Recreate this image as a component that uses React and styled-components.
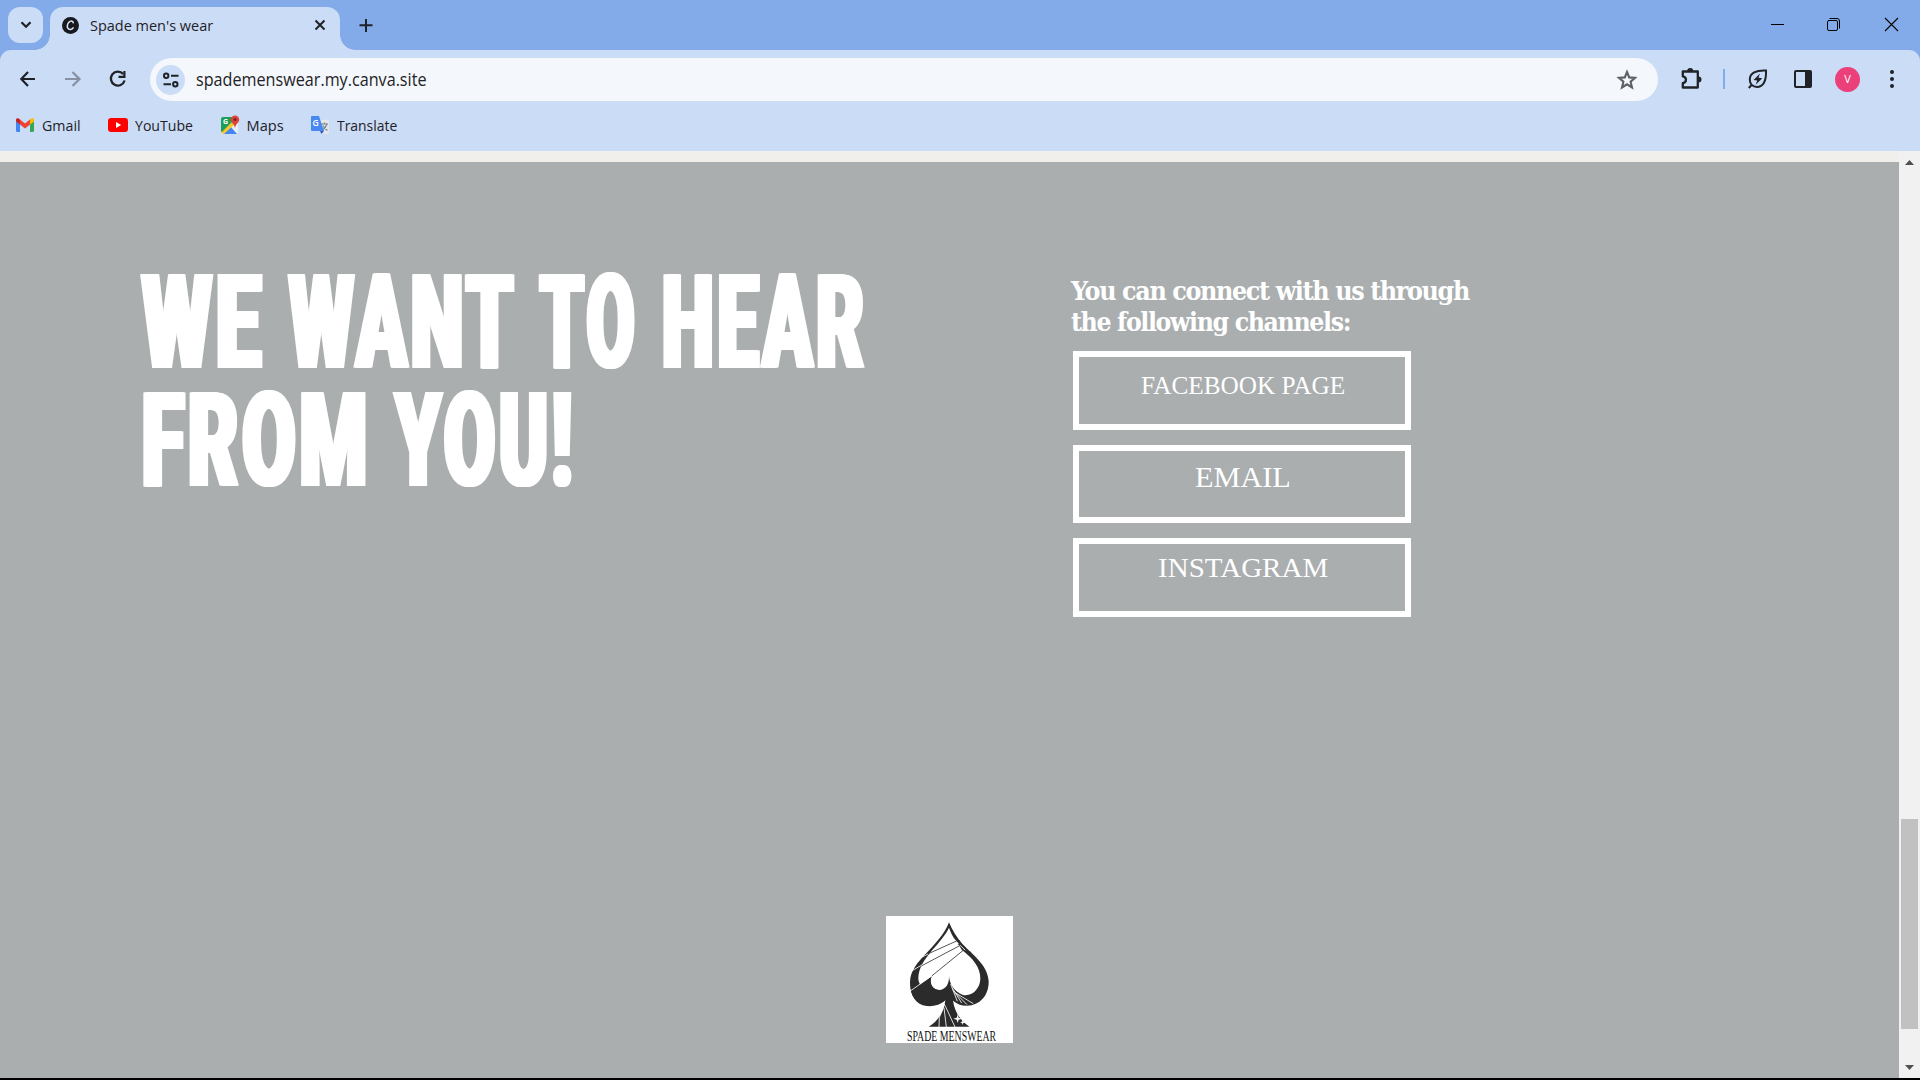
import React, { useLayoutEffect, useRef, useState } from "react";
import styled, { createGlobalStyle } from "styled-components";

const GlobalStyle = createGlobalStyle`
  * { box-sizing: border-box; }
  html, body { margin: 0; padding: 0; overflow: hidden; background: #000; }
`;

const Window = styled.div`
  width: 1920px;
  height: 1080px;
  display: flex;
  flex-direction: column;
  border-bottom: 2px solid #000;
  font-family: "Open Sans", "Noto Sans", sans-serif;
  color: #1f2226;
  overflow: hidden;
`;

/* ---------- text squeezed to a given width ---------- */
const FitBox = styled.span`
  display: block;
  flex: none;
  width: ${(p) => p.$width}px;
  margin-left: ${(p) => p.$left || 0}px;
  white-space: nowrap;
`;
const FitInner = styled.span`
  display: inline-block;
  white-space: pre;
  transform-origin: left center;
`;
function Fit({ width, left, children }) {
  const ref = useRef(null);
  const [scale, setScale] = useState(1);
  useLayoutEffect(() => {
    setScale(width / ref.current.offsetWidth);
  }, [width, children]);
  return (
    <FitBox $width={width} $left={left}>
      <FitInner ref={ref} style={{ transform: `scaleX(${scale})` }}>{children}</FitInner>
    </FitBox>
  );
}

/* ---------- tab strip ---------- */
const TabStrip = styled.header`
  flex: none;
  height: 50px;
  display: flex;
  background: #84abe9;
  padding-left: 8px;
`;
const TabSearch = styled.button`
  width: 35px;
  height: 36px;
  margin: 7px 7px 0 0;
  padding: 0;
  border: 0;
  border-radius: 12px;
  background: #cbdcf6;
  display: grid;
  place-items: center;
`;
const Tab = styled.div`
  position: relative;
  width: 290px;
  height: 43px;
  margin-top: 7px;
  padding: 0 11px 7px 12px;
  display: flex;
  align-items: center;
  background: #cbdcf6;
  border-radius: 13px 13px 0 0;
  font-size: 14.6px;
  line-height: 22px;
  &::before, &::after {
    content: "";
    position: absolute;
    bottom: 0;
    width: 15px;
    height: 15px;
  }
  &::before { left: -15px; background: radial-gradient(circle at 0 0, transparent 14.5px, #cbdcf6 15px); }
  &::after { right: -15px; background: radial-gradient(circle at 100% 0, transparent 14.5px, #cbdcf6 15px); }
`;
const TabIcon = styled.svg`
  width: 17px;
  height: 17px;
  margin-right: 11px;
`;
const TabClose = styled.svg`
  width: 18px;
  height: 18px;
  margin-left: auto;
`;
const NewTab = styled.svg`
  width: 20px;
  height: 20px;
  margin: 15px 0 0 15.5px;
`;
const Controls = styled.div`
  margin-left: auto;
  display: flex;
  gap: 42px;
  padding: 17px 21px 0 0;
  svg { width: 15px; height: 15px; display: block; }
`;

/* ---------- toolbar ---------- */
const ToolbarBack = styled.div`
  flex: none;
  height: 101px;
  background: #84abe9;
`;
const Toolbar = styled.div`
  height: 101px;
  background: #cbdcf6;
  border-radius: 11px 11px 0 0;
  display: flex;
  flex-direction: column;
`;
const NavRow = styled.div`
  display: flex;
  align-items: center;
  height: 58px;
  padding: 0 16px;
`;
const Icon = styled.svg`
  flex: none;
  width: 24px;
  height: 24px;
  margin-left: ${(p) => p.$left || 0}px;
`;
const Omnibox = styled.div`
  flex: none;
  width: 1508px;
  height: 43px;
  margin: 1px 0 0 20px;
  padding: 0 19px 0 6px;
  display: flex;
  align-items: center;
  border-radius: 22px;
  background: #f4f7fc;
  font-size: 17.4px;
  line-height: 26px;
`;
const SiteInfo = styled.div`
  width: 30px;
  height: 30px;
  margin-right: 11px;
  border-radius: 50%;
  background: #cbdcf6;
  display: grid;
  place-items: center;
`;
const Address = styled.div`
  padding-bottom: 2px;
`;
const Divider = styled.div`
  width: 2px;
  height: 20px;
  margin: 0 20px 0 20px;
  background: #84abe9;
`;
const Avatar = styled.div`
  width: 25px;
  height: 25px;
  margin-left: 20.5px;
  border-radius: 50%;
  background: #ec407a;
  color: #fff;
  font-size: 11px;
  line-height: 24px;
  text-align: center;
`;
const Bookmarks = styled.nav`
  display: flex;
  padding: 5px 0 0 15px;
`;
const Bookmark = styled.a`
  display: flex;
  align-items: center;
  height: 24px;
  margin-right: ${(p) => p.$gap}px;
  font-size: 14.6px;
  line-height: 22px;
  svg { flex: none; width: 20px; height: 20px; margin-right: ${(p) => p.$inner}px; }
`;

/* ---------- page ---------- */
const Viewport = styled.div`
  flex: 1;
  min-height: 0;
  display: flex;
`;
const Page = styled.main`
  flex: 1;
  display: flex;
  flex-direction: column;
  background: #aaaeaf;
  border-top: 11px solid #f0efeb;
  color: #fff;
`;
const Contact = styled.section`
  display: flex;
  height: 754px;
  padding: 102px 0 0 142px;
`;
const Title = styled.h1`
  width: 929px;
  margin: 0;
  font-family: Roboto, sans-serif;
  font-weight: 900;
  font-size: 131px;
  line-height: 118px;
  letter-spacing: 7px;
  text-shadow: 1.5px 0 #fff, -1.5px 0 #fff, 3px 0 #fff, -3px 0 #fff, 4.5px 0 #fff, -4.5px 0 #fff;
`;
const TitleLine = styled.span`
  display: flex;
`;
const Channels = styled.div`
  display: flex;
  flex-direction: column;
  padding-top: 12px;
`;
const Lead = styled.p`
  margin: 0 0 13px;
  font-family: "DejaVu Serif", serif;
  font-weight: 700;
  font-size: 26px;
  line-height: 31px;
  letter-spacing: -1.5px;
`;
const Channel = styled.a`
  width: 338px;
  height: 78.5px;
  margin: 0 0 15px 2px;
  padding: ${(p) => p.$top}px 0 0 2px;
  border: 6px solid #fff;
  display: flex;
  justify-content: center;
  font-family: "Liberation Serif", serif;
  font-size: ${(p) => p.$size}px;
  line-height: 32px;
`;
const Logo = styled.figure`
  width: 127px;
  height: 127px;
  margin: 0 0 0 886px;
  background: #fff;
  display: flex;
  flex-direction: column;
  align-items: center;
  svg { flex: none; width: 127px; height: 112px; }
`;
const LogoName = styled.figcaption`
  height: 15px;
  padding-left: 4px;
  color: #111;
  font-family: "Liberation Serif", serif;
  font-size: 15.5px;
  line-height: 15px;
`;
const Scrollbar = styled.div`
  width: 21px;
  padding-top: 9px;
  display: flex;
  flex-direction: column;
  align-items: center;
  background: #f1f1f1;
  svg { width: 9px; height: 5px; }
`;
const Thumb = styled.div`
  width: 17px;
  height: 210px;
  margin: 654px 0 36px;
  background: #c1c1c1;
`;

const stroke = { fill: "none", stroke: "#1f2226", strokeWidth: 2 };

function Spade() {
  return (
    <svg viewBox="48 48 381 336">
      <path fill="#2b2b2b" d="M237 67C246 88 259 112 278 133C306 162 354 196 356 244C357 286 329 318 290 317C273 317 260 311 249 302C254 336 271 362 298 380H176C204 363 222 337 226 301C212 315 190 320 170 318C137 315 119 284 120 246C121 213 143 187 166 163C192 135 225 101 237 67Z" />
      <path fill="#fff" d="M237 83C229 102 205 130 187 150C165 177 145 203 145 235C145 246 149 253 156 260L184 231C174 252 189 269 207 270C227 270 238 252 237 229C239 253 253 276 279 285C310 290 330 263 331 237C332 202 308 174 275 149L260 124C248 112 242 97 237 83Z" />
      <path fill="#2b2b2b" d="M122 272L185 229C177 252 188 269 207 270L170 300L130 290Z" />
      <path fill="none" stroke="#333" strokeWidth="2.5" d="M162 167L264 121M133 209L269 137M185 228L286 146" />
      <path fill="none" stroke="#fff" strokeWidth="2.5" d="M153 173L174 162M125 213L157 194M118 275L185 228M242 252L262 304M246 263L275 309M250 272L291 314M257 279L310 311M224 312L208 353L207 381M222 323L229 381M225 316L255 381M260 126L286 151" />
      <path fill="#fff" d="M263 343l3 10 10 3-10 3-3 10-3-10-10-3 10-3zM278 359l2 6 6 2-6 2-2 6-2-6-6-2 6-2z" />
      <path fill="#222" d="M262 122l7-1-2 6zM264 133l5-4 1 8z" />
    </svg>
  );
}

export default function App() {
  return (
    <Window>
      <GlobalStyle />
      <TabStrip>
        <TabSearch>
          <svg width="12" height="8" viewBox="0 0 12 8"><path {...stroke} strokeWidth="2.2" d="M1.5 1.2L6 5.8L10.5 1.2" /></svg>
        </TabSearch>
        <Tab>
          <TabIcon viewBox="0 0 17 17">
            <circle cx="8.5" cy="8.5" r="8.5" fill="#17191f" />
            <path d="M11.2 6.4C11.4 4.4 9.8 3.6 8.1 4.4C5.7 5.5 4.6 9 5.8 11.2C7.2 13.5 10 12.7 11.5 10.4" fill="none" stroke="#dde7f8" strokeWidth="1.5" />
          </TabIcon>
          <Fit width={123}>Spade men's wear</Fit>
          <TabClose viewBox="0 0 18 18"><path {...stroke} d="M4.5 4.5L13.5 13.5M13.5 4.5L4.5 13.5" /></TabClose>
        </Tab>
        <NewTab viewBox="0 0 20 20"><path {...stroke} d="M10 4V17M3.5 10.3H16.5" /></NewTab>
        <Controls>
          <svg viewBox="0 0 15 15"><path d="M1 7.5H14" stroke="#000" /></svg>
          <svg viewBox="0 0 15 15"><g fill="none" stroke="#000"><rect x="0.5" y="3.5" width="10" height="10" rx="1.5" /><path d="M2.5 1.5H10A2.5 2.5 0 0 1 12.5 4V11.5" /></g></svg>
          <svg viewBox="0 0 15 15"><path d="M1 1L14 14M14 1L1 14" stroke="#000" strokeWidth="1.1" /></svg>
        </Controls>
      </TabStrip>

      <ToolbarBack>
        <Toolbar>
          <NavRow>
            <Icon viewBox="0 0 24 24"><path {...stroke} strokeWidth="2.2" d="M19 12H6M12 5L5.3 12L12 19" /></Icon>
            <Icon $left={21} viewBox="0 0 24 24"><path {...stroke} stroke="#8791a3" strokeWidth="2.2" d="M4 12H17M11.5 5L18.5 12L11.5 19" /></Icon>
            <Icon $left={21} viewBox="0 0 24 24">
              <path {...stroke} strokeWidth="2.3" d="M17.2 7A7 7 0 1 0 18.6 13.5" />
              <path fill="#1f2226" d="M19.5 4V11H12.5V8.8H17.3V4Z" />
            </Icon>
            <Omnibox>
              <SiteInfo>
                <svg width="18" height="16" viewBox="0 0 18 16"><g {...stroke}><circle cx="4.2" cy="3.7" r="2.2" /><path d="M9 3.7H16.5M1.5 12.3H9" /><circle cx="13.3" cy="12.3" r="2.2" /></g></svg>
              </SiteInfo>
              <Address><Fit width={230.5}>spademenswear.my.canva.site</Fit></Address>
              <Icon $left={1188.5} viewBox="0 0 24 24"><path fill="none" stroke="#5d6167" strokeWidth="2.1" d="M12 4L14.2 9.4L20 9.9L15.6 13.7L17 19.4L12 16.3L7 19.4L8.4 13.7L4 9.9L9.8 9.4Z" /></Icon>
            </Omnibox>
            <Icon $left={21} viewBox="0 0 24 24">
              <path {...stroke} strokeWidth="2.3" strokeLinejoin="round" d="M4 4.5H18.8V20.5H3.8V16.2C8 15.5 8 10 3.8 9.3V4.5Z" />
              <path fill="#1f2226" d="M8.2 4A3 3 0 0 1 14.2 4ZM19.5 9.4A3 3 0 0 1 19.5 15.4Z" />
            </Icon>
            <Divider />
            <Icon $left={1} viewBox="0 0 24 24">
              <path {...stroke} d="M20 3.5C10 3 3.8 6 3.8 12.5C3.8 17.5 7 20 11 20C17 20 20.5 14 20 3.5ZM2.8 21L6 17.5" />
              <path fill="#1f2226" d="M14 6.5L7.5 13L11.2 13.5L9.7 17.8L16.3 11.3L12.5 10.8Z" />
            </Icon>
            <Icon $left={21} viewBox="0 0 24 24"><rect {...stroke} x="4" y="4" width="16" height="16" rx="1" /><path fill="#1f2226" d="M14 4H20V20H14Z" /></Icon>
            <Avatar>V</Avatar>
            <Icon $left={20.5} viewBox="0 0 24 24"><g fill="#1f2226"><circle cx="12" cy="5" r="2" /><circle cx="12" cy="12" r="2" /><circle cx="12" cy="19" r="2" /></g></Icon>
          </NavRow>
          <Bookmarks>
            <Bookmark $gap={26.5} $inner={7}>
              <svg viewBox="0 0 20 20">
                <path fill="#4285f4" d="M1 6V15.5C1 16.3 1.6 17 2.4 17H5V9Z" />
                <path fill="#34a853" d="M19 6V15.5C19 16.3 18.4 17 17.6 17H15V9Z" />
                <path fill="#ea4335" d="M5 4.6L10 8.4L15 4.6V9.6L10 13.4L5 9.6Z" />
                <path fill="#c5221f" d="M1 5C1 3 3.2 2.7 5 4.6V9.6L1 6.6Z" />
                <path fill="#fbbc04" d="M19 5C19 3 16.8 2.7 15 4.6V9.6L19 6.6Z" />
              </svg>
              <Fit width={39}>Gmail</Fit>
            </Bookmark>
            <Bookmark $gap={27} $inner={7}>
              <svg viewBox="0 0 20 20"><rect y="3" width="20" height="14" rx="3.2" fill="#f00" /><path fill="#fff" d="M8 7V13L13.2 10Z" /></svg>
              <Fit width={58}>YouTube</Fit>
            </Bookmark>
            <Bookmark $gap={26} $inner={7}>
              <svg viewBox="0 0 20 20">
                <rect x="1" y="2" width="17" height="17" rx="2" fill="#e9edf0" />
                <path fill="#1e9e58" d="M3 2H13L14 7L2 18L1 16V4Q1 2 3 2Z" />
                <path fill="#4285f4" d="M3 19L10 11L17 19Z" />
                <path fill="#f8c72c" d="M1.4 17.5L13.5 5.5L16 8L4 19H3Z" />
                <path fill="#4285f4" d="M6 19L10.5 14L15.5 19Z" />
                <text x="3" y="9" fill="#fff" fontSize="7" fontWeight="700">G</text>
                <path fill="#dc4437" d="M15 0.5A4.2 4.2 0 0 1 19.2 4.7C19.2 7.6 15.7 8.5 15 13C14.3 8.5 10.8 7.6 10.8 4.7A4.2 4.2 0 0 1 15 0.5Z" />
                <circle cx="15" cy="4.6" r="1.5" fill="#7b231e" />
              </svg>
              <Fit width={37}>Maps</Fit>
            </Bookmark>
            <Bookmark $gap={0} $inner={7}>
              <svg viewBox="0 0 20 20">
                <path fill="#e4e6e9" d="M8 5H18Q19 5 19 6V18Q19 19 18 19H12Z" />
                <path fill="none" stroke="#6f8391" strokeWidth="1.1" d="M11 9H18M14.5 7.5V9M17 9C16 12 14 14 12.5 15M13 10.5C14 13 16 14.5 17.5 15.5" />
                <path fill="#4889f0" d="M2 1H9L14 16H2Q1 16 1 15V2Q1 1 2 1Z" />
                <path fill="#3556b8" d="M10 16H14L11.5 19Z" />
                <text x="2.6" y="11.4" fill="#fff" fontSize="8.5" fontWeight="600">G</text>
              </svg>
              <Fit width={60}>Translate</Fit>
            </Bookmark>
          </Bookmarks>
        </Toolbar>
      </ToolbarBack>

      <Viewport>
        <Page>
          <Contact>
            <Title>
              <TitleLine>
                <Fit width={123}>WE</Fit>
                <Fit width={228} left={24}>WANT</Fit>
                <Fit width={98} left={23}>TO</Fit>
                <Fit width={206} left={24}>HEAR</Fit>
              </TitleLine>
              <TitleLine>
                <Fit width={229}>FROM</Fit>
                <Fit width={181} left={24}>YOU!</Fit>
              </TitleLine>
            </Title>
            <Channels>
              <Lead>
                <Fit width={398}>You can connect with us through</Fit>
                <Fit width={279}>the following channels:</Fit>
              </Lead>
              <Channel $top={13} $size={25}><Fit width={204}>FACEBOOK PAGE</Fit></Channel>
              <Channel $top={10} $size={29}><Fit width={96}>EMAIL</Fit></Channel>
              <Channel $top={8} $size={28}><Fit width={170}>INSTAGRAM</Fit></Channel>
            </Channels>
          </Contact>
          <Logo>
            <Spade />
            <LogoName><Fit width={89}>SPADE MENSWEAR</Fit></LogoName>
          </Logo>
        </Page>
        <Scrollbar>
          <svg viewBox="0 0 9 5"><path fill="#505050" d="M0 5L4.5 0L9 5Z" /></svg>
          <Thumb />
          <svg viewBox="0 0 9 5"><path fill="#505050" d="M0 0H9L4.5 5Z" /></svg>
        </Scrollbar>
      </Viewport>
    </Window>
  );
}
